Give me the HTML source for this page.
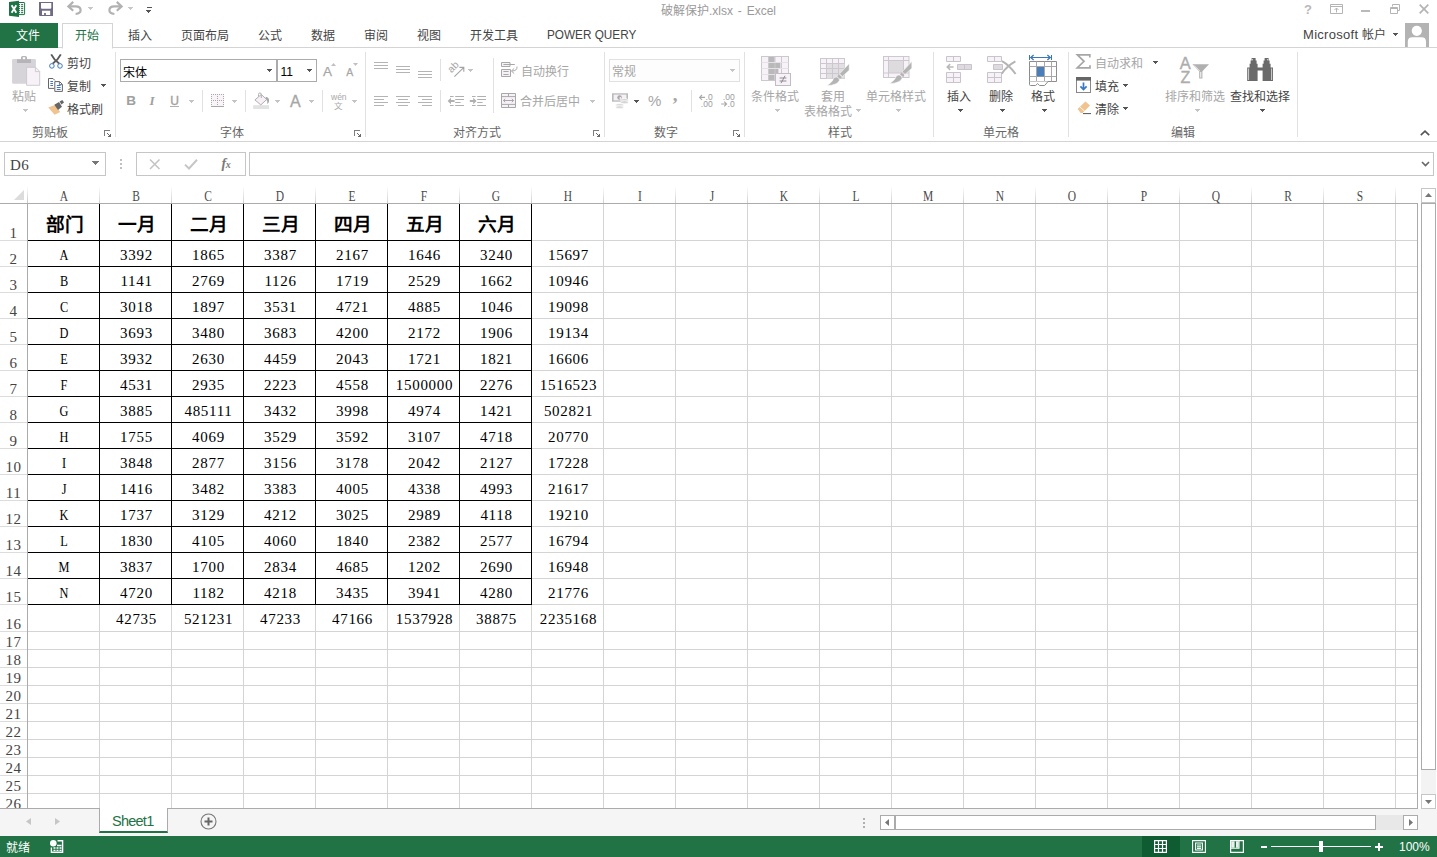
<!DOCTYPE html>
<html lang="zh-CN"><head><meta charset="utf-8"><title>破解保护.xlsx - Excel</title>
<style>

html,body{margin:0;padding:0;}
body{width:1437px;height:857px;overflow:hidden;background:#fff;position:relative;font-family:"Liberation Sans",sans-serif;font-size:12px;color:#444;}
.a{position:absolute;}
.t{position:absolute;white-space:nowrap;line-height:16px;height:16px;font-size:12px;}
.g{color:#a6a6a6;}
.d{color:#444;}
.hl{position:absolute;height:1px;background:#d4d4d4;}
.vl{position:absolute;width:1px;background:#d4d4d4;}
.c{position:absolute;width:71px;padding-left:2px;text-align:center;font-family:"Liberation Serif",serif;font-size:15px;letter-spacing:0.7px;color:#000;line-height:16px;height:16px;white-space:nowrap;}
.ch{position:absolute;width:72px;text-align:center;font-family:"Liberation Serif",serif;font-size:14px;color:#4a4a4a;line-height:14px;height:14px;transform:scaleX(.82);}
.rh{position:absolute;left:0;width:27px;text-align:center;font-family:"Liberation Serif",serif;font-size:15px;letter-spacing:0.5px;color:#444;line-height:14px;height:14px;}
.hd{position:absolute;width:72px;text-align:center;font-family:"Liberation Serif",serif;font-weight:bold;font-size:18.67px;color:#000;line-height:22px;height:22px;white-space:nowrap;}
.bk{position:absolute;background:#000;}
.cl{transform:scaleX(.82);}
svg{position:absolute;overflow:visible;}
.sep{position:absolute;width:1px;background:#e1e1e1;}
.dd{position:absolute;width:0;height:0;border-left:3px solid transparent;border-right:3px solid transparent;border-top:3px solid #b5b5b5;}
.ddk{border-top-color:#555;}
.lbl{color:#666;}

</style></head><body>
<!-- title bar -->
<div class="t d" style="left:661px;top:2.5px;font-size:12px;color:#9a9a9a;word-spacing:1.5px;">破解保护.xlsx - Excel</div>
<!-- tabs -->
<div class="a" style="left:0;top:47px;width:1437px;height:1px;background:#d4d4d4"></div>
<div class="a" style="left:0;top:23px;width:58px;height:25px;background:#217346"></div>
<div class="a" style="left:62px;top:23px;width:49px;height:24px;background:#fff;border:1px solid #d4d4d4;border-bottom:1px solid #fff;"></div>
<div class="t d" style="left:16px;top:28px;font-size:12px;color:#fff;">文件</div>
<div class="t d" style="left:75px;top:28px;font-size:12px;color:#217346;">开始</div>
<div class="t d" style="left:128px;top:28px;">插入</div>
<div class="t d" style="left:181px;top:28px;">页面布局</div>
<div class="t d" style="left:258px;top:28px;">公式</div>
<div class="t d" style="left:310.5px;top:28px;">数据</div>
<div class="t d" style="left:364px;top:28px;">审阅</div>
<div class="t d" style="left:417px;top:28px;">视图</div>
<div class="t d" style="left:469.5px;top:28px;">开发工具</div>
<div class="t d" style="left:546.8px;top:26.6px;font-size:13px;transform:scaleX(.905);transform-origin:0 50%;">POWER QUERY</div>
<div class="t d" style="left:1303px;top:26.5px;font-size:13px;letter-spacing:0.3px;">Microsoft <span style="font-size:12px;letter-spacing:0">帐户</span></div>
<svg width="5" height="3" viewBox="0 0 5 3" shape-rendering="crispEdges" fill="#555" style="left:1393px;top:33px"><rect x="0" y="0" width="5" height="1"/><rect x="1" y="1" width="3" height="1"/><rect x="2" y="2" width="1" height="1"/></svg>
<div class="a" style="left:1405px;top:23px;width:24px;height:24px;background:#b3b3b3;overflow:hidden"><svg width="24" height="24" viewBox="0 0 24 24" style="left:0;top:0"><circle cx="11.8" cy="7.8" r="5.1" fill="#fff"/><path d="M2.8 24 V18.6 Q2.8 14.2 7.4 14.2 H16.4 Q21 14.2 21 18.6 V24 Z" fill="#fff"/></svg></div>
<!-- ribbon -->
<div class="a" style="left:0;top:141px;width:1437px;height:1px;background:#d4d4d4"></div>
<div class="sep" style="left:115px;top:52px;height:85px"></div>
<div class="sep" style="left:365px;top:52px;height:85px"></div>
<div class="sep" style="left:604px;top:52px;height:85px"></div>
<div class="sep" style="left:744px;top:52px;height:85px"></div>
<div class="sep" style="left:933px;top:52px;height:85px"></div>
<div class="sep" style="left:1068px;top:52px;height:85px"></div>
<div class="sep" style="left:1297px;top:52px;height:85px"></div>
<!-- QAT -->
<svg width="18" height="18" viewBox="0 0 18 18" style="left:8px;top:0px"><path d="M10.5 2.5 H16 Q16.6 2.5 16.6 3.1 V14 Q16.6 14.6 16 14.6 H10.5 Z" fill="#fff" stroke="#1f7244" stroke-width="1"/><g fill="#1f7244"><rect x="13.1" y="4.1" width="2.1" height="1.1"/><rect x="11" y="4.1" width="1" height="1.1"/><rect x="13.1" y="6.1" width="2.1" height="1.1"/><rect x="11" y="6.1" width="1" height="1.1"/><rect x="13.1" y="8.1" width="2.1" height="1.1"/><rect x="11" y="8.1" width="1" height="1.1"/><rect x="13.1" y="10.1" width="2.1" height="1.1"/><rect x="11" y="10.1" width="1" height="1.1"/><rect x="13.1" y="12.1" width="2.1" height="1.1"/><rect x="11" y="12.1" width="1" height="1.1"/></g><path d="M1 2.1 L11 0.7 V17.1 L1 15.8 Z" fill="#1f7244"/><path d="M3.6 5.3 L8.3 12.7 M8.3 5.3 L3.6 12.7" stroke="#fff" stroke-width="1.9"/></svg>
<svg width="14" height="14" viewBox="0 0 14 14" style="left:39px;top:2px"><path d="M0 0 H14 V14 H0.8 L0 13.2 Z" fill="#6f6a85"/><path d="M2 1 H12.3 V5.8 Q12.3 6.8 11.3 6.8 H3 Q2 6.8 2 5.8 Z" fill="#fff"/><path d="M3 8.7 H11.2 V13 H3 Z" fill="#fff"/><path d="M5.1 11 H6.9 V13 H5.1 Z" fill="#6f6a85"/></svg>
<svg width="16" height="15" viewBox="0 0 16 15" style="left:67px;top:1px"><path d="M1.4 5.4 H8.6 Q13.6 5.4 13.6 9.3 Q13.6 12.6 8.6 13" fill="none" stroke="#b2b2b2" stroke-width="2.2"/><path d="M6.2 0.9 L1.4 5.4 L6.2 9.8" fill="none" stroke="#b2b2b2" stroke-width="2.2"/></svg>
<svg width="5" height="3" viewBox="0 0 5 3" shape-rendering="crispEdges" fill="#c8c8c8" style="left:88px;top:7px"><rect x="0" y="0" width="5" height="1"/><rect x="1" y="1" width="3" height="1"/><rect x="2" y="2" width="1" height="1"/></svg>
<svg width="16" height="15" viewBox="0 0 16 15" style="left:107px;top:1px"><path d="M14.6 5.4 H7.4 Q2.4 5.4 2.4 9.3 Q2.4 12.6 7.4 13" fill="none" stroke="#b2b2b2" stroke-width="2.2"/><path d="M9.8 0.9 L14.6 5.4 L9.8 9.8" fill="none" stroke="#b2b2b2" stroke-width="2.2"/></svg>
<svg width="5" height="3" viewBox="0 0 5 3" shape-rendering="crispEdges" fill="#c8c8c8" style="left:128px;top:7px"><rect x="0" y="0" width="5" height="1"/><rect x="1" y="1" width="3" height="1"/><rect x="2" y="2" width="1" height="1"/></svg>
<div class="a" style="left:147px;top:7px;width:5px;height:1px;background:#555"></div>
<svg width="5" height="3" viewBox="0 0 5 3" shape-rendering="crispEdges" fill="#555" style="left:146px;top:10px"><rect x="0" y="0" width="5" height="1"/><rect x="1" y="1" width="3" height="1"/><rect x="2" y="2" width="1" height="1"/></svg>
<!-- window controls -->
<div class="t d" style="left:1304px;top:1.5999999999999996px;font-size:13px;color:#b9b9b9;font-weight:bold;">?</div>
<svg width="13" height="10" viewBox="0 0 13 10" style="left:1330px;top:4px"><path d="M0.5 0.5 H12.5 V9.5 H0.5 Z M0.5 2.5 H12.5" fill="none" stroke="#b4b4b4" stroke-width="1"/><path d="M6.5 8.5 V4.2 M4.5 6 L6.5 4 L8.5 6" fill="none" stroke="#b4b4b4" stroke-width="1"/></svg>
<div class="a" style="left:1361px;top:10px;width:9px;height:2px;background:#b9b9b9"></div>
<svg width="10" height="10" viewBox="0 0 10 10" style="left:1390px;top:4px"><path d="M2.5 2.5 V0.5 H9.5 V6.5 H7.5" fill="none" stroke="#b4b4b4" stroke-width="1"/><path d="M0.5 3.5 H7.5 V9.5 H0.5 Z M0.5 4.5 H7.5" fill="none" stroke="#b4b4b4" stroke-width="1"/></svg>
<svg width="10" height="10" viewBox="0 0 10 10" style="left:1419px;top:4px"><path d="M0.7 0.7 L9.3 9.3 M9.3 0.7 L0.7 9.3" stroke="#b4b4b4" stroke-width="1.7"/></svg>
<!-- clipboard -->
<svg width="28" height="30" viewBox="0 0 28 30" style="left:12px;top:56px"><rect x="0.1" y="3" width="23.8" height="24.8" rx="1.2" fill="#d6d4d8"/><path d="M5 3.2 H9 V1.6 Q9 0 10.6 0 H13.4 Q15 0 15 1.6 V3.2 H19 V6.9 H5 Z" fill="#b6b4b8"/><rect x="10.8" y="1.2" width="2.4" height="2" fill="#fff"/><path d="M14.6 11.3 H23.6 L27.7 15.4 V29.3 H14.6 Z" fill="#f7f2f8" stroke="#cbc6cd" stroke-width="0.9"/><path d="M23.4 11.5 V15.6 H27.5" fill="none" stroke="#cbc6cd" stroke-width="0.9"/></svg>
<div class="t g" style="left:11.7px;top:88.6px;">粘贴</div>
<svg width="5" height="3" viewBox="0 0 5 3" shape-rendering="crispEdges" fill="#c4c4c4" style="left:23px;top:109px"><rect x="0" y="0" width="5" height="1"/><rect x="1" y="1" width="3" height="1"/><rect x="2" y="2" width="1" height="1"/></svg>
<svg width="14" height="15" viewBox="0 0 14 15" style="left:49px;top:54px"><path d="M2.2 0.4 Q5 6 10.4 9.8 M11.8 0.4 Q9 6 3.6 9.8" fill="none" stroke="#5a5a5a" stroke-width="1.9"/><circle cx="2.9" cy="11.9" r="2.3" fill="#fff" stroke="#3b78c3" stroke-width="1"/><circle cx="11" cy="11.9" r="2.3" fill="#fff" stroke="#3b78c3" stroke-width="1"/></svg>
<div class="t d" style="left:67.3px;top:55.6px;">剪切</div>
<svg width="15" height="14" viewBox="0 0 15 14" style="left:48px;top:78px"><path d="M6.3 10.4 H0.5 V0.5 H5 L6.9 2.4" fill="none" stroke="#666" stroke-width="1"/><path d="M2.4 3.5 H5 M2.4 5.5 H5 M2.4 7.5 H5" stroke="#3b78c3" stroke-width="1"/><path d="M6.8 3.6 H11.6 L14.4 6.4 V13.4 H6.8 Z" fill="#fff" stroke="#666" stroke-width="1"/><path d="M11.4 3.8 V6.6 H14.2" fill="none" stroke="#666" stroke-width="0.9"/><path d="M8.8 7.5 H12.6 M8.8 9.5 H12.6 M8.8 11.5 H12.6" stroke="#3b78c3" stroke-width="1"/></svg>
<div class="t d" style="left:67.3px;top:78.6px;">复制</div>
<svg width="5" height="3" viewBox="0 0 5 3" shape-rendering="crispEdges" fill="#555" style="left:101px;top:84px"><rect x="0" y="0" width="5" height="1"/><rect x="1" y="1" width="3" height="1"/><rect x="2" y="2" width="1" height="1"/></svg>
<svg width="17" height="16" viewBox="0 0 17 16" style="left:48px;top:100px"><path d="M0.3 7.4 L7 5 L12.2 12 L6.6 14.8 Z" fill="#f0c38f"/><path d="M6.3 4.7 L11 2 L14 6.8 L10 10 Z" fill="#666"/><path d="M11.6 1.6 L14.4 0 L16 2.4 L13.4 4.4 Z" fill="#666"/></svg>
<div class="t d" style="left:67.2px;top:101.5px;">格式刷</div>
<div class="t lbl" style="left:31.7px;top:124.80000000000001px;">剪贴板</div>
<svg width="8" height="8" viewBox="0 0 8 8" shape-rendering="crispEdges" style="left:104px;top:130px"><path d="M0 0 H6 V1 H1 V6 H0 Z" fill="#7d7d7d"/><path d="M3 3 h1 v1 h1 v1 h1 v-1 h1 v3 h-3 v-1 h1 v-1 h-1 v-1 h-1 Z" fill="#6a6a6a"/></svg>
<!-- font -->
<div class="a" style="left:120px;top:59px;width:155px;height:21px;border:1px solid #ababab;background:#fff"></div>
<div class="a" style="left:277px;top:59px;width:38px;height:21px;border:1px solid #ababab;background:#fff"></div>
<div class="t d" style="left:122.5px;top:64.5px;font-size:12px;color:#000;">宋体</div>
<svg width="5" height="3" viewBox="0 0 5 3" shape-rendering="crispEdges" fill="#555" style="left:267px;top:69px"><rect x="0" y="0" width="5" height="1"/><rect x="1" y="1" width="3" height="1"/><rect x="2" y="2" width="1" height="1"/></svg>
<div class="t d" style="left:280.5px;top:63.8px;font-size:12px;color:#000;">11</div>
<svg width="5" height="3" viewBox="0 0 5 3" shape-rendering="crispEdges" fill="#555" style="left:307px;top:69px"><rect x="0" y="0" width="5" height="1"/><rect x="1" y="1" width="3" height="1"/><rect x="2" y="2" width="1" height="1"/></svg>
<div class="t g" style="left:323px;top:63.5px;font-size:13.5px;-webkit-text-stroke:0.25px #a6a6a6;">A</div>
<svg width="5" height="3" viewBox="0 0 5 3" style="left:331px;top:63px"><path d="M0 3 L2.5 0 L5 3 Z" fill="#c0c0c0"/></svg>
<div class="t g" style="left:346.3px;top:64.3px;font-size:10.5px;-webkit-text-stroke:0.25px #a6a6a6;">A</div>
<svg width="5" height="3" viewBox="0 0 5 3" style="left:353px;top:63px"><path d="M0 0 L2.5 3 L5 0 Z" fill="#c0c0c0"/></svg>
<div class="t g" style="left:126.3px;top:93.3px;font-size:13.5px;font-weight:bold;color:#a0a0a0;">B</div>
<div class="t g" style="left:149.5px;top:93px;font-size:13px;font-family:'Liberation Serif',serif;font-style:italic;font-weight:bold;color:#a0a0a0;">I</div>
<div class="t g" style="left:170.3px;top:92.6px;font-size:12px;color:#a0a0a0;-webkit-text-stroke:0.35px #a0a0a0;">U</div>
<div class="a" style="left:170px;top:106px;width:9px;height:1px;background:#b0b0b0"></div>
<svg width="5" height="3" viewBox="0 0 5 3" shape-rendering="crispEdges" fill="#c4c4c4" style="left:189px;top:100px"><rect x="0" y="0" width="5" height="1"/><rect x="1" y="1" width="3" height="1"/><rect x="2" y="2" width="1" height="1"/></svg>
<div class="sep" style="left:202px;top:90px;height:22px"></div>
<svg width="13" height="13" viewBox="0 0 13 13" shape-rendering="crispEdges" style="left:211px;top:94px"><rect x="0" y="0" width="13" height="12" fill="#f8f4f8"/><g fill="#a8a8a8"><rect x="0" y="0" width="1" height="1"/><rect x="2" y="0" width="1" height="1"/><rect x="4" y="0" width="1" height="1"/><rect x="6" y="0" width="1" height="1"/><rect x="8" y="0" width="1" height="1"/><rect x="10" y="0" width="1" height="1"/><rect x="12" y="0" width="1" height="1"/><rect x="0" y="2" width="1" height="1"/><rect x="6" y="2" width="1" height="1"/><rect x="12" y="2" width="1" height="1"/><rect x="0" y="4" width="1" height="1"/><rect x="6" y="4" width="1" height="1"/><rect x="12" y="4" width="1" height="1"/><rect x="0" y="6" width="1" height="1"/><rect x="2" y="6" width="1" height="1"/><rect x="4" y="6" width="1" height="1"/><rect x="6" y="6" width="1" height="1"/><rect x="8" y="6" width="1" height="1"/><rect x="10" y="6" width="1" height="1"/><rect x="12" y="6" width="1" height="1"/><rect x="0" y="8" width="1" height="1"/><rect x="6" y="8" width="1" height="1"/><rect x="12" y="8" width="1" height="1"/><rect x="0" y="10" width="1" height="1"/><rect x="6" y="10" width="1" height="1"/><rect x="12" y="10" width="1" height="1"/><rect x="0" y="12" width="13" height="1"/></g></svg>
<svg width="5" height="3" viewBox="0 0 5 3" shape-rendering="crispEdges" fill="#c4c4c4" style="left:232px;top:100px"><rect x="0" y="0" width="5" height="1"/><rect x="1" y="1" width="3" height="1"/><rect x="2" y="2" width="1" height="1"/></svg>
<div class="sep" style="left:245px;top:90px;height:22px"></div>
<svg width="17" height="17" viewBox="0 0 17 17" style="left:253px;top:92px"><rect x="0.2" y="13.2" width="15.8" height="3.8" fill="#e2e2e2"/><path d="M8.3 2.5 L13.7 7.5 L7.8 12.9 L1.9 7.9 Z" fill="#f7f1f7" stroke="#b0b0b0" stroke-width="1"/><path d="M5.5 4.6 V2.4 Q5.5 1 6.9 1 Q8.3 1 8.3 2.4 V6" fill="none" stroke="#b0b0b0" stroke-width="1"/><path d="M12.6 4.8 Q16.6 5.4 16 9.6 Q15.6 11.6 14.2 12 Q14.8 8.6 13.2 7.2 Z" fill="#a8a8a8"/></svg>
<svg width="5" height="3" viewBox="0 0 5 3" shape-rendering="crispEdges" fill="#c4c4c4" style="left:275px;top:100px"><rect x="0" y="0" width="5" height="1"/><rect x="1" y="1" width="3" height="1"/><rect x="2" y="2" width="1" height="1"/></svg>
<div class="t g" style="left:289.9px;top:93.8px;font-size:16px;-webkit-text-stroke:0.3px #a6a6a6;">A</div>
<svg width="5" height="3" viewBox="0 0 5 3" shape-rendering="crispEdges" fill="#c4c4c4" style="left:309px;top:100px"><rect x="0" y="0" width="5" height="1"/><rect x="1" y="1" width="3" height="1"/><rect x="2" y="2" width="1" height="1"/></svg>
<div class="sep" style="left:322px;top:90px;height:22px"></div>
<div class="t g" style="left:331px;top:89px;font-size:8.5px;color:#a8a8a8;line-height:10px;height:10px;top:91.5px;">wén</div>
<div class="t g" style="left:334.4px;top:98.5px;font-size:8.5px;color:#a8a8a8;line-height:10px;height:10px;top:100.5px;">文</div>
<svg width="5" height="3" viewBox="0 0 5 3" shape-rendering="crispEdges" fill="#c4c4c4" style="left:352px;top:100px"><rect x="0" y="0" width="5" height="1"/><rect x="1" y="1" width="3" height="1"/><rect x="2" y="2" width="1" height="1"/></svg>
<div class="t lbl" style="left:220px;top:124.80000000000001px;">字体</div>
<svg width="8" height="8" viewBox="0 0 8 8" shape-rendering="crispEdges" style="left:354px;top:130px"><path d="M0 0 H6 V1 H1 V6 H0 Z" fill="#7d7d7d"/><path d="M3 3 h1 v1 h1 v1 h1 v-1 h1 v3 h-3 v-1 h1 v-1 h-1 v-1 h-1 Z" fill="#6a6a6a"/></svg>
<!-- alignment -->
<div class="a" style="left:374px;top:62px;width:14px;height:1px;background:#b4b4b4"></div>
<div class="a" style="left:374px;top:65px;width:14px;height:1px;background:#b4b4b4"></div>
<div class="a" style="left:374px;top:68px;width:14px;height:1px;background:#b4b4b4"></div>
<div class="a" style="left:396px;top:66px;width:14px;height:1px;background:#b4b4b4"></div>
<div class="a" style="left:396px;top:69px;width:14px;height:1px;background:#b4b4b4"></div>
<div class="a" style="left:396px;top:72px;width:14px;height:1px;background:#b4b4b4"></div>
<div class="a" style="left:418px;top:71px;width:14px;height:1px;background:#b4b4b4"></div>
<div class="a" style="left:418px;top:74px;width:14px;height:1px;background:#b4b4b4"></div>
<div class="a" style="left:418px;top:77px;width:14px;height:1px;background:#b4b4b4"></div>
<div class="a" style="left:374px;top:96px;width:14px;height:1px;background:#b4b4b4"></div>
<div class="a" style="left:374px;top:99px;width:10px;height:1px;background:#b4b4b4"></div>
<div class="a" style="left:374px;top:102px;width:14px;height:1px;background:#b4b4b4"></div>
<div class="a" style="left:374px;top:105px;width:10px;height:1px;background:#b4b4b4"></div>
<div class="a" style="left:396.0px;top:96px;width:14px;height:1px;background:#b4b4b4"></div>
<div class="a" style="left:398.0px;top:99px;width:10px;height:1px;background:#b4b4b4"></div>
<div class="a" style="left:396.0px;top:102px;width:14px;height:1px;background:#b4b4b4"></div>
<div class="a" style="left:398.0px;top:105px;width:10px;height:1px;background:#b4b4b4"></div>
<div class="a" style="left:418px;top:96px;width:14px;height:1px;background:#b4b4b4"></div>
<div class="a" style="left:422px;top:99px;width:10px;height:1px;background:#b4b4b4"></div>
<div class="a" style="left:418px;top:102px;width:14px;height:1px;background:#b4b4b4"></div>
<div class="a" style="left:422px;top:105px;width:10px;height:1px;background:#b4b4b4"></div>
<div class="sep" style="left:440px;top:59px;height:22px"></div>
<div class="sep" style="left:440px;top:90px;height:22px"></div>
<svg width="18" height="17" viewBox="0 0 18 17" style="left:447px;top:61px"><g transform="translate(4.6 12.2) rotate(-45)"><text x="0" y="0" font-family="Liberation Sans" font-size="10" fill="#a3a3a3">ab</text></g><path d="M7.4 15.6 L16.4 6.8 M12.4 6.4 H16.8 V10.8" fill="none" stroke="#a3a3a3" stroke-width="1.1"/></svg>
<svg width="5" height="3" viewBox="0 0 5 3" shape-rendering="crispEdges" fill="#c4c4c4" style="left:468px;top:69px"><rect x="0" y="0" width="5" height="1"/><rect x="1" y="1" width="3" height="1"/><rect x="2" y="2" width="1" height="1"/></svg>
<svg width="17" height="12" viewBox="0 0 17 12" style="left:447px;top:95px"><path d="M3 1.5 H6.6 M8.2 1.5 H17 M8.2 4.5 H17 M8.2 7.5 H13.6 M3 10.5 H6.6 M8.2 10.5 H17" stroke="#b0b0b0" stroke-width="1"/><path d="M0.6 6 L4 2.8 V4.9 H7.6 V7.1 H4 V9.2 Z" fill="#b0b0b0"/></svg>
<svg width="17" height="12" viewBox="0 0 17 12" style="left:469px;top:95px"><path d="M3 1.5 H6.6 M8.2 1.5 H17 M8.2 4.5 H17 M8.2 7.5 H13.6 M3 10.5 H6.6 M8.2 10.5 H17" stroke="#b0b0b0" stroke-width="1"/><path d="M7.6 6 L4.2 2.8 V4.9 H0.8 V7.1 H4.2 V9.2 Z" fill="#b0b0b0"/></svg>
<div class="sep" style="left:493px;top:58px;height:55px"></div>
<svg width="17" height="15" viewBox="0 0 17 15" style="left:501px;top:62px"><path d="M0.5 0.5 H9 V4.5 H0.5 Z" fill="#f7f2f8" stroke="#a8a8a8"/><path d="M2.4 2.5 H13.8" stroke="#a8a8a8"/><path d="M0.5 7.5 H9.5 V14.5 H0.5 Z" fill="#f7f2f8" stroke="#a8a8a8"/><path d="M2.4 9.5 H7.6 M2.4 12.5 H7.6" stroke="#a8a8a8"/><path d="M16 4.6 Q16.4 9 10.8 9 M13.2 6.4 L10.4 9 L13.2 11.6" fill="none" stroke="#a8a8a8" stroke-width="1"/></svg>
<div class="t g" style="left:520.5px;top:63.599999999999994px;">自动换行</div>
<svg width="15" height="15" viewBox="0 0 15 15" style="left:501px;top:93px"><path d="M0.5 0.5 H14.5 V14.5 H0.5 Z" fill="#f7f2f8" stroke="#a8a8a8"/><path d="M0.5 3.6 H14.5 M0.5 11.4 H14.5 M7.5 0.5 V3.6 M7.5 11.4 V14.5" fill="none" stroke="#a8a8a8" stroke-width="1"/><path d="M2.4 7.5 H12.6 M4.2 5.8 L2.4 7.5 L4.2 9.2 M10.8 5.8 L12.6 7.5 L10.8 9.2" fill="none" stroke="#a8a8a8" stroke-width="1"/></svg>
<div class="t g" style="left:520px;top:93.5px;">合并后居中</div>
<svg width="5" height="3" viewBox="0 0 5 3" shape-rendering="crispEdges" fill="#c4c4c4" style="left:590px;top:100px"><rect x="0" y="0" width="5" height="1"/><rect x="1" y="1" width="3" height="1"/><rect x="2" y="2" width="1" height="1"/></svg>
<div class="t lbl" style="left:452.8px;top:124.80000000000001px;">对齐方式</div>
<svg width="8" height="8" viewBox="0 0 8 8" shape-rendering="crispEdges" style="left:593px;top:130px"><path d="M0 0 H6 V1 H1 V6 H0 Z" fill="#7d7d7d"/><path d="M3 3 h1 v1 h1 v1 h1 v-1 h1 v3 h-3 v-1 h1 v-1 h-1 v-1 h-1 Z" fill="#6a6a6a"/></svg>
<!-- number -->
<div class="a" style="left:609px;top:59px;width:129px;height:21px;border:1px solid #e1e1e1;background:#fdfdfd"></div>
<div class="t g" style="left:612.4px;top:63.8px;">常规</div>
<svg width="5" height="3" viewBox="0 0 5 3" shape-rendering="crispEdges" fill="#c4c4c4" style="left:730px;top:69px"><rect x="0" y="0" width="5" height="1"/><rect x="1" y="1" width="3" height="1"/><rect x="2" y="2" width="1" height="1"/></svg>
<svg width="18" height="17" viewBox="0 0 18 17" style="left:611px;top:93px"><rect x="1" y="0.3" width="16" height="8.4" fill="#b9b9b9"/><rect x="2.6" y="1.6" width="12.8" height="5.8" fill="#f5f0f5"/><circle cx="8.6" cy="4.5" r="2.3" fill="#a8a8a8"/><circle cx="9.4" cy="4.9" r="1" fill="#f5f0f5"/><ellipse cx="13.4" cy="7" rx="3.9" ry="1.5" fill="#d4d4d4" stroke="#fff" stroke-width="0.7"/><ellipse cx="13.4" cy="9.2" rx="3.9" ry="1.5" fill="#d4d4d4" stroke="#fff" stroke-width="0.7"/><ellipse cx="8.6" cy="12" rx="3.9" ry="1.5" fill="#dadada" stroke="#fff" stroke-width="0.7"/><ellipse cx="8.6" cy="14.2" rx="3.9" ry="1.5" fill="#dadada" stroke="#fff" stroke-width="0.7"/></svg>
<svg width="5" height="3" viewBox="0 0 5 3" shape-rendering="crispEdges" fill="#555" style="left:634px;top:100px"><rect x="0" y="0" width="5" height="1"/><rect x="1" y="1" width="3" height="1"/><rect x="2" y="2" width="1" height="1"/></svg>
<div class="t g" style="left:648px;top:93.3px;font-size:15px;">%</div>
<div class="t g" style="left:672.8px;top:87px;font-size:19px;font-family:'Liberation Serif',serif;font-weight:bold;">,</div>
<div class="sep" style="left:691px;top:90px;height:22px"></div>
<svg width="15" height="14" viewBox="0 0 15 14" style="left:699px;top:94px"><path d="M0.6 3.4 H6 M3 1 L0.6 3.4 L3 5.8" fill="none" stroke="#a8a8a8" stroke-width="1.1"/><text x="6.6" y="6" font-family="Liberation Sans" font-size="8.5" fill="#9c9c9c">.0</text><text x="1.8" y="12.8" font-family="Liberation Sans" font-size="8.5" fill="#9c9c9c">.00</text></svg>
<svg width="15" height="14" viewBox="0 0 15 14" style="left:721px;top:94px"><text x="1.8" y="6" font-family="Liberation Sans" font-size="8.5" fill="#9c9c9c">.00</text><path d="M0.2 10 H5.6 M3.2 7.6 L5.6 10 L3.2 12.4" fill="none" stroke="#a8a8a8" stroke-width="1.1"/><text x="6.6" y="12.8" font-family="Liberation Sans" font-size="8.5" fill="#9c9c9c">.0</text></svg>
<div class="t lbl" style="left:653.8px;top:124.80000000000001px;">数字</div>
<svg width="8" height="8" viewBox="0 0 8 8" shape-rendering="crispEdges" style="left:733px;top:130px"><path d="M0 0 H6 V1 H1 V6 H0 Z" fill="#7d7d7d"/><path d="M3 3 h1 v1 h1 v1 h1 v-1 h1 v3 h-3 v-1 h1 v-1 h-1 v-1 h-1 Z" fill="#6a6a6a"/></svg>
<!-- styles -->
<svg width="30" height="30" viewBox="0 0 30 30" style="left:761px;top:56px"><rect x="0.5" y="0.5" width="27" height="24" fill="#f7f2f8" stroke="#cdc7cf" stroke-width="1"/><rect x="8" y="1" width="5.6" height="23" fill="#b9b9b9"/><rect x="8" y="7" width="11.4" height="5" fill="#b9b9b9"/><rect x="8" y="13" width="9.4" height="5" fill="#b9b9b9"/><path d="M7.5 0.5 V24.5 M14 0.5 V24.5 M20.5 0.5 V24.5" stroke="#cdc7cf" stroke-width="1" fill="none"/><path d="M0.5 6.5 H27.5 M0.5 12.5 H27.5 M0.5 18.5 H27.5" stroke="#e6e1e7" stroke-width="1" fill="none"/><rect x="14.5" y="17.5" width="15" height="12" fill="#f7f2f8" stroke="#c2bdc4" stroke-width="1"/><path d="M18.6 22 H25.4 M18.6 25 H25.4 M24 19.8 L20 27.2" stroke="#8c8c8c" stroke-width="1" fill="none"/></svg>
<div class="t g" style="left:751px;top:88.7px;">条件格式</div>
<svg width="5" height="3" viewBox="0 0 5 3" shape-rendering="crispEdges" fill="#c4c4c4" style="left:775px;top:109px"><rect x="0" y="0" width="5" height="1"/><rect x="1" y="1" width="3" height="1"/><rect x="2" y="2" width="1" height="1"/></svg>
<svg width="30" height="28" viewBox="0 0 30 28" style="left:820px;top:58px"><rect x="0.5" y="0.5" width="24" height="20" fill="#f7f2f8" stroke="#cdc7cf" stroke-width="1"/><rect x="6.5" y="5.5" width="18" height="15" fill="#e2dfe3"/><path d="M6.5 0.5 V20.5 M12.5 0.5 V20.5 M18.5 0.5 V20.5 M0.5 5.5 H24.5 M0.5 10.5 H24.5 M0.5 15.5 H24.5" stroke="#cdc7cf" stroke-width="1" fill="none"/><path d="M29.2 5.6 V12.2 L22.4 18.4 L19.6 15.8 Z" fill="#b4b4b4" stroke="#fff" stroke-width="0.5"/><path d="M19 16.6 L21.8 19.2 L20 20.8 L17.4 18.4 Z" fill="#b4b4b4"/><path d="M16.6 19 Q19.6 19.6 19.4 22.4 Q17.4 27 7 27.6 Q12.6 24 13.4 20.8 Q14.6 18.6 16.6 19 Z" fill="#b4b4b4" stroke="#fff" stroke-width="0.5"/></svg>
<div class="t g" style="left:821px;top:88.7px;">套用</div>
<div class="t g" style="left:804px;top:104.3px;">表格格式</div>
<svg width="5" height="3" viewBox="0 0 5 3" shape-rendering="crispEdges" fill="#c4c4c4" style="left:856px;top:109px"><rect x="0" y="0" width="5" height="1"/><rect x="1" y="1" width="3" height="1"/><rect x="2" y="2" width="1" height="1"/></svg>
<svg width="30" height="28" viewBox="0 0 30 28" style="left:883px;top:56px"><rect x="0.5" y="0.5" width="25.5" height="21" fill="#f7f2f8" stroke="#cdc7cf" stroke-width="1"/><rect x="5.5" y="4.5" width="15" height="12.5" fill="#dedbdf"/><path d="M5.5 0.5 V21.5 M20.5 0.5 V21.5 M0.5 4.5 H26 M0.5 17 H26" stroke="#cdc7cf" stroke-width="1" fill="none"/><path d="M28.8 5.6 V12.2 L22 18.4 L19.2 15.8 Z" fill="#b4b4b4" stroke="#fff" stroke-width="0.5"/><path d="M18.6 16.6 L21.4 19.2 L19.6 20.8 L17 18.4 Z" fill="#b4b4b4"/><path d="M16.2 19 Q19.2 19.6 19 22.4 Q17 27 6.6 27.6 Q12.2 24 13 20.8 Q14.2 18.6 16.2 19 Z" fill="#b4b4b4" stroke="#fff" stroke-width="0.5"/></svg>
<div class="t g" style="left:866px;top:88.7px;">单元格样式</div>
<svg width="5" height="3" viewBox="0 0 5 3" shape-rendering="crispEdges" fill="#c4c4c4" style="left:896px;top:109px"><rect x="0" y="0" width="5" height="1"/><rect x="1" y="1" width="3" height="1"/><rect x="2" y="2" width="1" height="1"/></svg>
<div class="t lbl" style="left:827.6px;top:124.80000000000001px;">样式</div>
<!-- cells -->
<svg width="27" height="27" viewBox="0 0 27 27" style="left:946px;top:56px"><path d="M0.5 0.5 H14.5 V5.5 H0.5 Z M7.5 0.5 V5.5" fill="#f7f2f8" stroke="#c9c3cb"/><path d="M11.5 8.5 H25.5 V13.5 H11.5 Z" fill="#dedae0" stroke="#c9c3cb"/><path d="M18.5 8.5 V13.5" stroke="#c9c3cb"/><path d="M0.5 16.5 H14.5 V26.5 H0.5 Z" fill="#f7f2f8" stroke="#c9c3cb"/><path d="M7.5 16.5 V26.5 M0.5 21.5 H14.5" stroke="#c9c3cb" fill="none"/><path d="M1.2 11 H7.6 M4.2 8.1 L1.2 11 L4.2 13.9" fill="none" stroke="#b9b9b9" stroke-width="1.5"/></svg>
<div class="t d" style="left:947px;top:88.7px;">插入</div>
<svg width="5" height="3" viewBox="0 0 5 3" shape-rendering="crispEdges" fill="#555" style="left:958px;top:109px"><rect x="0" y="0" width="5" height="1"/><rect x="1" y="1" width="3" height="1"/><rect x="2" y="2" width="1" height="1"/></svg>
<svg width="30" height="27" viewBox="0 0 30 27" style="left:987px;top:56px"><path d="M0.5 0.5 H14.5 V5.5 H0.5 Z M7.5 0.5 V5.5" fill="#f7f2f8" stroke="#c9c3cb"/><path d="M6.5 8.5 H15.5 V13.5 H6.5 Z" fill="#dedae0" stroke="#c9c3cb"/><path d="M0.5 16.5 H14.5 V26.5 H0.5 Z" fill="#f7f2f8" stroke="#c9c3cb"/><path d="M7.5 16.5 V26.5 M0.5 21.5 H14.5" stroke="#c9c3cb" fill="none"/><path d="M15 5.2 Q22 9 28.6 18 M28.4 5.4 Q20 10 14.8 17.6" fill="none" stroke="#b4b4b4" stroke-width="2"/></svg>
<div class="t d" style="left:989px;top:88.7px;">删除</div>
<svg width="5" height="3" viewBox="0 0 5 3" shape-rendering="crispEdges" fill="#555" style="left:1000px;top:109px"><rect x="0" y="0" width="5" height="1"/><rect x="1" y="1" width="3" height="1"/><rect x="2" y="2" width="1" height="1"/></svg>
<svg width="29" height="32" viewBox="0 0 29 32" style="left:1029px;top:54px"><path d="M1.5 3.5 H21.5 M0.5 1 V6 M22.5 1 V6" fill="none" stroke="#3b78b8" stroke-width="1"/><path d="M4.6 1 L1.8 3.5 L4.6 6 M18.4 1 L21.2 3.5 L18.4 6" fill="none" stroke="#3b78b8" stroke-width="1.3"/><path d="M0.5 7.5 H27.5 V27.5 H0.5 Z" fill="#fff" stroke="#8c8c8c"/><path d="M7.5 7.5 V27.5 M15.5 7.5 V27.5 M22.5 7.5 V27.5 M0.5 12.5 H27.5 M0.5 22.5 H27.5" stroke="#a8a8a8" fill="none"/><rect x="8" y="13" width="7" height="9.4" fill="#4a7eba"/><path d="M0.5 27.5 V30.5 Q0.5 31.5 1.5 31.5 H6.6 L8.6 29.6 L10.6 31.5 H15.6 L19 27.6" fill="#fff" stroke="#8c8c8c"/></svg>
<div class="t d" style="left:1031px;top:88.7px;">格式</div>
<svg width="5" height="3" viewBox="0 0 5 3" shape-rendering="crispEdges" fill="#555" style="left:1042px;top:109px"><rect x="0" y="0" width="5" height="1"/><rect x="1" y="1" width="3" height="1"/><rect x="2" y="2" width="1" height="1"/></svg>
<div class="t lbl" style="left:983px;top:124.80000000000001px;">单元格</div>
<!-- editing -->
<svg width="15" height="15" viewBox="0 0 15 15" style="left:1076px;top:54px"><path d="M13.8 3.4 V0.9 H1.4 L8 7.3 L1.2 13.9 H14 V11.2" fill="none" stroke="#a6a6a6" stroke-width="1.7"/></svg>
<div class="t g" style="left:1095.3px;top:55.6px;">自动求和</div>
<svg width="5" height="3" viewBox="0 0 5 3" shape-rendering="crispEdges" fill="#555" style="left:1153px;top:61px"><rect x="0" y="0" width="5" height="1"/><rect x="1" y="1" width="3" height="1"/><rect x="2" y="2" width="1" height="1"/></svg>
<svg width="15" height="16" viewBox="0 0 15 16" style="left:1076px;top:77px"><rect x="0.5" y="0.5" width="14" height="15" fill="#fff" stroke="#888"/><rect x="0" y="0" width="15" height="3.6" fill="#666"/><path d="M7.5 5.6 V12.4 M4.4 9.4 L7.5 12.6 L10.6 9.4" fill="none" stroke="#3b78c3" stroke-width="1.7"/></svg>
<div class="t d" style="left:1095.3px;top:78.6px;">填充</div>
<svg width="5" height="3" viewBox="0 0 5 3" shape-rendering="crispEdges" fill="#555" style="left:1123px;top:84px"><rect x="0" y="0" width="5" height="1"/><rect x="1" y="1" width="3" height="1"/><rect x="2" y="2" width="1" height="1"/></svg>
<svg width="15" height="14" viewBox="0 0 15 14" style="left:1077px;top:101px"><path d="M0.6 8 L8.4 0.4 L13 4.6 L5.6 12 H3.6 Z" fill="#f0c38f"/><path d="M2.8 5.8 L7.6 10.2" stroke="#fff" stroke-width="0.9"/><path d="M6 12.6 H14" stroke="#555" stroke-width="1"/></svg>
<div class="t d" style="left:1095.3px;top:101.6px;">清除</div>
<svg width="5" height="3" viewBox="0 0 5 3" shape-rendering="crispEdges" fill="#555" style="left:1123px;top:107px"><rect x="0" y="0" width="5" height="1"/><rect x="1" y="1" width="3" height="1"/><rect x="2" y="2" width="1" height="1"/></svg>
<div class="t g" style="left:1179.8px;top:54.8px;font-size:16.5px;color:#adadad;-webkit-text-stroke:0.35px #adadad;">A</div>
<div class="t g" style="left:1180.6px;top:70.1px;font-size:16px;color:#adadad;-webkit-text-stroke:0.35px #adadad;">Z</div>
<svg width="18" height="15" viewBox="0 0 18 15" style="left:1192px;top:64px"><path d="M0.4 0.2 H17 L10.4 7.2 V14.6 L7.2 14.6 V7.2 Z" fill="#b0b0b0"/><path d="M8.3 8 V13.6 H9.3 V8 Z" fill="#fff"/><path d="M2.6 1.4 L8 7.2" stroke="#e8e8e8" stroke-width="0.8"/></svg>
<div class="t g" style="left:1164.6px;top:88.7px;">排序和筛选</div>
<svg width="5" height="3" viewBox="0 0 5 3" shape-rendering="crispEdges" fill="#c4c4c4" style="left:1195px;top:109px"><rect x="0" y="0" width="5" height="1"/><rect x="1" y="1" width="3" height="1"/><rect x="2" y="2" width="1" height="1"/></svg>
<svg width="26" height="23" viewBox="0 0 26 23" style="left:1247px;top:58px"><path d="M4.6 0 H8.6 V2.6 H9.6 V5.8 H10.6 V9.6 H15.6 V5.8 H16.6 V2.6 H17.6 V0 H21.6 V2.6 H22.6 V5.8 H23.6 V9.6 H26 V23 H15.6 V12.6 H10.6 V23 H0.2 V9.6 H2.6 V5.8 H3.6 V2.6 H4.6 Z" fill="#6a6a6a"/><path d="M1.6 10.5 V22 M24.6 10.5 V22 M5.6 1 V2.4 M20.6 1 V2.4" stroke="#fff" stroke-width="0.7"/></svg>
<div class="t d" style="left:1230.3px;top:88.7px;">查找和选择</div>
<svg width="5" height="3" viewBox="0 0 5 3" shape-rendering="crispEdges" fill="#555" style="left:1260px;top:109px"><rect x="0" y="0" width="5" height="1"/><rect x="1" y="1" width="3" height="1"/><rect x="2" y="2" width="1" height="1"/></svg>
<div class="t lbl" style="left:1170.6px;top:124.80000000000001px;">编辑</div>
<svg width="10" height="6" viewBox="0 0 10 6" style="left:1420px;top:130px"><path d="M0.8 5.2 L5 1.2 L9.2 5.2" fill="none" stroke="#555" stroke-width="1.6"/></svg>

<!-- formula bar -->
<div class="a" style="left:4px;top:152px;width:100px;height:22px;border:1px solid #c6c6c6"></div>
<div class="t" style="left:10px;top:157px;font-family:'Liberation Serif',serif;font-size:15px;letter-spacing:0.5px;color:#444">D6</div>
<svg width="7" height="4" viewBox="0 0 7 4" shape-rendering="crispEdges" fill="#777" style="left:92px;top:161px"><rect x="0" y="0" width="7" height="1"/><rect x="1" y="1" width="5" height="1"/><rect x="2" y="2" width="3" height="1"/><rect x="3" y="3" width="1" height="1"/></svg>
<div class="a" style="left:120px;top:159px;width:2px;height:2px;background:#c0c0c0"></div>
<div class="a" style="left:120px;top:163px;width:2px;height:2px;background:#c0c0c0"></div>
<div class="a" style="left:120px;top:167px;width:2px;height:2px;background:#c0c0c0"></div>
<div class="a" style="left:136px;top:152px;width:108px;height:22px;border:1px solid #c6c6c6"></div>
<svg width="12" height="11" viewBox="0 0 12 11" style="left:149px;top:159px"><path d="M1 0.5 L10.5 10 M10.5 0.5 L1 10" stroke="#c3c3c3" stroke-width="1.5" fill="none"/></svg>
<svg width="14" height="11" viewBox="0 0 14 11" style="left:184px;top:159px"><path d="M1 5.6 L5 9.5 L13 0.8" stroke="#c6c6c6" stroke-width="2" fill="none"/></svg>
<div class="t" style="left:221.5px;top:156px;font-family:'Liberation Serif',serif;font-style:italic;font-weight:bold;font-size:14px;color:#7a7a7a;letter-spacing:-0.5px">f<span style="font-size:10px">x</span></div>
<div class="a" style="left:249px;top:152px;width:1183px;height:22px;border:1px solid #c6c6c6"></div>
<svg width="9" height="6" viewBox="0 0 9 6" style="left:1421px;top:161px"><path d="M1 1 L4.5 4.5 L8 1" stroke="#666" stroke-width="1.6" fill="none"/></svg>
<!-- grid -->
<svg width="10" height="10" viewBox="0 0 10 10" style="left:14px;top:190px"><path d="M10 0 V10 H0 Z" fill="#dcdcdc"/></svg>
<div class="a" style="left:0;top:203px;width:1418px;height:1px;background:#ababab"></div>
<div class="a" style="left:27px;top:186px;width:1px;height:18px;background:linear-gradient(#fff,#c4c4c4)"></div>
<div class="a" style="left:27px;top:203px;width:1px;height:605px;background:#ababab"></div>
<div class="a" style="left:1417px;top:203px;width:1px;height:605px;background:#ababab"></div>
<div class="a" style="left:0;top:808px;width:1418px;height:1px;background:#ababab"></div>
<div class="a" style="left:99px;top:186px;width:1px;height:17px;background:linear-gradient(#fff,#d0d0d0)"></div>
<div class="vl" style="left:99px;top:204px;height:604px"></div>
<div class="a" style="left:171px;top:186px;width:1px;height:17px;background:linear-gradient(#fff,#d0d0d0)"></div>
<div class="vl" style="left:171px;top:204px;height:604px"></div>
<div class="a" style="left:243px;top:186px;width:1px;height:17px;background:linear-gradient(#fff,#d0d0d0)"></div>
<div class="vl" style="left:243px;top:204px;height:604px"></div>
<div class="a" style="left:315px;top:186px;width:1px;height:17px;background:linear-gradient(#fff,#d0d0d0)"></div>
<div class="vl" style="left:315px;top:204px;height:604px"></div>
<div class="a" style="left:387px;top:186px;width:1px;height:17px;background:linear-gradient(#fff,#d0d0d0)"></div>
<div class="vl" style="left:387px;top:204px;height:604px"></div>
<div class="a" style="left:459px;top:186px;width:1px;height:17px;background:linear-gradient(#fff,#d0d0d0)"></div>
<div class="vl" style="left:459px;top:204px;height:604px"></div>
<div class="a" style="left:531px;top:186px;width:1px;height:17px;background:linear-gradient(#fff,#d0d0d0)"></div>
<div class="vl" style="left:531px;top:204px;height:604px"></div>
<div class="a" style="left:603px;top:186px;width:1px;height:17px;background:linear-gradient(#fff,#d0d0d0)"></div>
<div class="vl" style="left:603px;top:204px;height:604px"></div>
<div class="a" style="left:675px;top:186px;width:1px;height:17px;background:linear-gradient(#fff,#d0d0d0)"></div>
<div class="vl" style="left:675px;top:204px;height:604px"></div>
<div class="a" style="left:747px;top:186px;width:1px;height:17px;background:linear-gradient(#fff,#d0d0d0)"></div>
<div class="vl" style="left:747px;top:204px;height:604px"></div>
<div class="a" style="left:819px;top:186px;width:1px;height:17px;background:linear-gradient(#fff,#d0d0d0)"></div>
<div class="vl" style="left:819px;top:204px;height:604px"></div>
<div class="a" style="left:891px;top:186px;width:1px;height:17px;background:linear-gradient(#fff,#d0d0d0)"></div>
<div class="vl" style="left:891px;top:204px;height:604px"></div>
<div class="a" style="left:963px;top:186px;width:1px;height:17px;background:linear-gradient(#fff,#d0d0d0)"></div>
<div class="vl" style="left:963px;top:204px;height:604px"></div>
<div class="a" style="left:1035px;top:186px;width:1px;height:17px;background:linear-gradient(#fff,#d0d0d0)"></div>
<div class="vl" style="left:1035px;top:204px;height:604px"></div>
<div class="a" style="left:1107px;top:186px;width:1px;height:17px;background:linear-gradient(#fff,#d0d0d0)"></div>
<div class="vl" style="left:1107px;top:204px;height:604px"></div>
<div class="a" style="left:1179px;top:186px;width:1px;height:17px;background:linear-gradient(#fff,#d0d0d0)"></div>
<div class="vl" style="left:1179px;top:204px;height:604px"></div>
<div class="a" style="left:1251px;top:186px;width:1px;height:17px;background:linear-gradient(#fff,#d0d0d0)"></div>
<div class="vl" style="left:1251px;top:204px;height:604px"></div>
<div class="a" style="left:1323px;top:186px;width:1px;height:17px;background:linear-gradient(#fff,#d0d0d0)"></div>
<div class="vl" style="left:1323px;top:204px;height:604px"></div>
<div class="a" style="left:1395px;top:186px;width:1px;height:17px;background:linear-gradient(#fff,#d0d0d0)"></div>
<div class="vl" style="left:1395px;top:204px;height:604px"></div>
<div class="ch" style="left:28px;top:190px">A</div>
<div class="ch" style="left:100px;top:190px">B</div>
<div class="ch" style="left:172px;top:190px">C</div>
<div class="ch" style="left:244px;top:190px">D</div>
<div class="ch" style="left:316px;top:190px">E</div>
<div class="ch" style="left:388px;top:190px">F</div>
<div class="ch" style="left:460px;top:190px">G</div>
<div class="ch" style="left:532px;top:190px">H</div>
<div class="ch" style="left:604px;top:190px">I</div>
<div class="ch" style="left:676px;top:190px">J</div>
<div class="ch" style="left:748px;top:190px">K</div>
<div class="ch" style="left:820px;top:190px">L</div>
<div class="ch" style="left:892px;top:190px">M</div>
<div class="ch" style="left:964px;top:190px">N</div>
<div class="ch" style="left:1036px;top:190px">O</div>
<div class="ch" style="left:1108px;top:190px">P</div>
<div class="ch" style="left:1180px;top:190px">Q</div>
<div class="ch" style="left:1252px;top:190px">R</div>
<div class="ch" style="left:1324px;top:190px">S</div>
<div class="hl" style="left:0;top:240px;width:27px;background:#dcdcdc"></div>
<div class="hl" style="left:28px;top:240px;width:1389px"></div>
<div class="hl" style="left:0;top:266px;width:27px;background:#dcdcdc"></div>
<div class="hl" style="left:28px;top:266px;width:1389px"></div>
<div class="hl" style="left:0;top:292px;width:27px;background:#dcdcdc"></div>
<div class="hl" style="left:28px;top:292px;width:1389px"></div>
<div class="hl" style="left:0;top:318px;width:27px;background:#dcdcdc"></div>
<div class="hl" style="left:28px;top:318px;width:1389px"></div>
<div class="hl" style="left:0;top:344px;width:27px;background:#dcdcdc"></div>
<div class="hl" style="left:28px;top:344px;width:1389px"></div>
<div class="hl" style="left:0;top:370px;width:27px;background:#dcdcdc"></div>
<div class="hl" style="left:28px;top:370px;width:1389px"></div>
<div class="hl" style="left:0;top:396px;width:27px;background:#dcdcdc"></div>
<div class="hl" style="left:28px;top:396px;width:1389px"></div>
<div class="hl" style="left:0;top:422px;width:27px;background:#dcdcdc"></div>
<div class="hl" style="left:28px;top:422px;width:1389px"></div>
<div class="hl" style="left:0;top:448px;width:27px;background:#dcdcdc"></div>
<div class="hl" style="left:28px;top:448px;width:1389px"></div>
<div class="hl" style="left:0;top:474px;width:27px;background:#dcdcdc"></div>
<div class="hl" style="left:28px;top:474px;width:1389px"></div>
<div class="hl" style="left:0;top:500px;width:27px;background:#dcdcdc"></div>
<div class="hl" style="left:28px;top:500px;width:1389px"></div>
<div class="hl" style="left:0;top:526px;width:27px;background:#dcdcdc"></div>
<div class="hl" style="left:28px;top:526px;width:1389px"></div>
<div class="hl" style="left:0;top:552px;width:27px;background:#dcdcdc"></div>
<div class="hl" style="left:28px;top:552px;width:1389px"></div>
<div class="hl" style="left:0;top:578px;width:27px;background:#dcdcdc"></div>
<div class="hl" style="left:28px;top:578px;width:1389px"></div>
<div class="hl" style="left:0;top:604px;width:27px;background:#dcdcdc"></div>
<div class="hl" style="left:28px;top:604px;width:1389px"></div>
<div class="hl" style="left:0;top:631px;width:27px;background:#dcdcdc"></div>
<div class="hl" style="left:28px;top:631px;width:1389px"></div>
<div class="hl" style="left:0;top:649px;width:27px;background:#dcdcdc"></div>
<div class="hl" style="left:28px;top:649px;width:1389px"></div>
<div class="hl" style="left:0;top:667px;width:27px;background:#dcdcdc"></div>
<div class="hl" style="left:28px;top:667px;width:1389px"></div>
<div class="hl" style="left:0;top:685px;width:27px;background:#dcdcdc"></div>
<div class="hl" style="left:28px;top:685px;width:1389px"></div>
<div class="hl" style="left:0;top:703px;width:27px;background:#dcdcdc"></div>
<div class="hl" style="left:28px;top:703px;width:1389px"></div>
<div class="hl" style="left:0;top:721px;width:27px;background:#dcdcdc"></div>
<div class="hl" style="left:28px;top:721px;width:1389px"></div>
<div class="hl" style="left:0;top:739px;width:27px;background:#dcdcdc"></div>
<div class="hl" style="left:28px;top:739px;width:1389px"></div>
<div class="hl" style="left:0;top:757px;width:27px;background:#dcdcdc"></div>
<div class="hl" style="left:28px;top:757px;width:1389px"></div>
<div class="hl" style="left:0;top:775px;width:27px;background:#dcdcdc"></div>
<div class="hl" style="left:28px;top:775px;width:1389px"></div>
<div class="hl" style="left:0;top:793px;width:27px;background:#dcdcdc"></div>
<div class="hl" style="left:28px;top:793px;width:1389px"></div>
<div class="a" style="left:0;top:204px;width:27px;height:604px;overflow:hidden">
<div class="rh" style="top:22px">1</div>
<div class="rh" style="top:48px">2</div>
<div class="rh" style="top:74px">3</div>
<div class="rh" style="top:100px">4</div>
<div class="rh" style="top:126px">5</div>
<div class="rh" style="top:152px">6</div>
<div class="rh" style="top:178px">7</div>
<div class="rh" style="top:204px">8</div>
<div class="rh" style="top:230px">9</div>
<div class="rh" style="top:256px">10</div>
<div class="rh" style="top:282px">11</div>
<div class="rh" style="top:308px">12</div>
<div class="rh" style="top:334px">13</div>
<div class="rh" style="top:360px">14</div>
<div class="rh" style="top:386px">15</div>
<div class="rh" style="top:413px">16</div>
<div class="rh" style="top:431px">17</div>
<div class="rh" style="top:449px">18</div>
<div class="rh" style="top:467px">19</div>
<div class="rh" style="top:485px">20</div>
<div class="rh" style="top:503px">21</div>
<div class="rh" style="top:521px">22</div>
<div class="rh" style="top:539px">23</div>
<div class="rh" style="top:557px">24</div>
<div class="rh" style="top:575px">25</div>
<div class="rh" style="top:593px">26</div>
</div>
<div class="hd" style="left:28.5px;top:213.5px">部门</div>
<div class="hd" style="left:100.5px;top:213.5px">一月</div>
<div class="hd" style="left:172.5px;top:213.5px">二月</div>
<div class="hd" style="left:244.5px;top:213.5px">三月</div>
<div class="hd" style="left:316.5px;top:213.5px">四月</div>
<div class="hd" style="left:388.5px;top:213.5px">五月</div>
<div class="hd" style="left:460.5px;top:213.5px">六月</div>
<div class="c cl" style="left:27px;top:247px">A</div>
<div class="c" style="left:99px;top:247px">3392</div>
<div class="c" style="left:171px;top:247px">1865</div>
<div class="c" style="left:243px;top:247px">3387</div>
<div class="c" style="left:315px;top:247px">2167</div>
<div class="c" style="left:387px;top:247px">1646</div>
<div class="c" style="left:459px;top:247px">3240</div>
<div class="c" style="left:531px;top:247px">15697</div>
<div class="c cl" style="left:27px;top:273px">B</div>
<div class="c" style="left:99px;top:273px">1141</div>
<div class="c" style="left:171px;top:273px">2769</div>
<div class="c" style="left:243px;top:273px">1126</div>
<div class="c" style="left:315px;top:273px">1719</div>
<div class="c" style="left:387px;top:273px">2529</div>
<div class="c" style="left:459px;top:273px">1662</div>
<div class="c" style="left:531px;top:273px">10946</div>
<div class="c cl" style="left:27px;top:299px">C</div>
<div class="c" style="left:99px;top:299px">3018</div>
<div class="c" style="left:171px;top:299px">1897</div>
<div class="c" style="left:243px;top:299px">3531</div>
<div class="c" style="left:315px;top:299px">4721</div>
<div class="c" style="left:387px;top:299px">4885</div>
<div class="c" style="left:459px;top:299px">1046</div>
<div class="c" style="left:531px;top:299px">19098</div>
<div class="c cl" style="left:27px;top:325px">D</div>
<div class="c" style="left:99px;top:325px">3693</div>
<div class="c" style="left:171px;top:325px">3480</div>
<div class="c" style="left:243px;top:325px">3683</div>
<div class="c" style="left:315px;top:325px">4200</div>
<div class="c" style="left:387px;top:325px">2172</div>
<div class="c" style="left:459px;top:325px">1906</div>
<div class="c" style="left:531px;top:325px">19134</div>
<div class="c cl" style="left:27px;top:351px">E</div>
<div class="c" style="left:99px;top:351px">3932</div>
<div class="c" style="left:171px;top:351px">2630</div>
<div class="c" style="left:243px;top:351px">4459</div>
<div class="c" style="left:315px;top:351px">2043</div>
<div class="c" style="left:387px;top:351px">1721</div>
<div class="c" style="left:459px;top:351px">1821</div>
<div class="c" style="left:531px;top:351px">16606</div>
<div class="c cl" style="left:27px;top:377px">F</div>
<div class="c" style="left:99px;top:377px">4531</div>
<div class="c" style="left:171px;top:377px">2935</div>
<div class="c" style="left:243px;top:377px">2223</div>
<div class="c" style="left:315px;top:377px">4558</div>
<div class="c" style="left:387px;top:377px">1500000</div>
<div class="c" style="left:459px;top:377px">2276</div>
<div class="c" style="left:531px;top:377px">1516523</div>
<div class="c cl" style="left:27px;top:403px">G</div>
<div class="c" style="left:99px;top:403px">3885</div>
<div class="c" style="left:171px;top:403px">485111</div>
<div class="c" style="left:243px;top:403px">3432</div>
<div class="c" style="left:315px;top:403px">3998</div>
<div class="c" style="left:387px;top:403px">4974</div>
<div class="c" style="left:459px;top:403px">1421</div>
<div class="c" style="left:531px;top:403px">502821</div>
<div class="c cl" style="left:27px;top:429px">H</div>
<div class="c" style="left:99px;top:429px">1755</div>
<div class="c" style="left:171px;top:429px">4069</div>
<div class="c" style="left:243px;top:429px">3529</div>
<div class="c" style="left:315px;top:429px">3592</div>
<div class="c" style="left:387px;top:429px">3107</div>
<div class="c" style="left:459px;top:429px">4718</div>
<div class="c" style="left:531px;top:429px">20770</div>
<div class="c cl" style="left:27px;top:455px">I</div>
<div class="c" style="left:99px;top:455px">3848</div>
<div class="c" style="left:171px;top:455px">2877</div>
<div class="c" style="left:243px;top:455px">3156</div>
<div class="c" style="left:315px;top:455px">3178</div>
<div class="c" style="left:387px;top:455px">2042</div>
<div class="c" style="left:459px;top:455px">2127</div>
<div class="c" style="left:531px;top:455px">17228</div>
<div class="c cl" style="left:27px;top:481px">J</div>
<div class="c" style="left:99px;top:481px">1416</div>
<div class="c" style="left:171px;top:481px">3482</div>
<div class="c" style="left:243px;top:481px">3383</div>
<div class="c" style="left:315px;top:481px">4005</div>
<div class="c" style="left:387px;top:481px">4338</div>
<div class="c" style="left:459px;top:481px">4993</div>
<div class="c" style="left:531px;top:481px">21617</div>
<div class="c cl" style="left:27px;top:507px">K</div>
<div class="c" style="left:99px;top:507px">1737</div>
<div class="c" style="left:171px;top:507px">3129</div>
<div class="c" style="left:243px;top:507px">4212</div>
<div class="c" style="left:315px;top:507px">3025</div>
<div class="c" style="left:387px;top:507px">2989</div>
<div class="c" style="left:459px;top:507px">4118</div>
<div class="c" style="left:531px;top:507px">19210</div>
<div class="c cl" style="left:27px;top:533px">L</div>
<div class="c" style="left:99px;top:533px">1830</div>
<div class="c" style="left:171px;top:533px">4105</div>
<div class="c" style="left:243px;top:533px">4060</div>
<div class="c" style="left:315px;top:533px">1840</div>
<div class="c" style="left:387px;top:533px">2382</div>
<div class="c" style="left:459px;top:533px">2577</div>
<div class="c" style="left:531px;top:533px">16794</div>
<div class="c cl" style="left:27px;top:559px">M</div>
<div class="c" style="left:99px;top:559px">3837</div>
<div class="c" style="left:171px;top:559px">1700</div>
<div class="c" style="left:243px;top:559px">2834</div>
<div class="c" style="left:315px;top:559px">4685</div>
<div class="c" style="left:387px;top:559px">1202</div>
<div class="c" style="left:459px;top:559px">2690</div>
<div class="c" style="left:531px;top:559px">16948</div>
<div class="c cl" style="left:27px;top:585px">N</div>
<div class="c" style="left:99px;top:585px">4720</div>
<div class="c" style="left:171px;top:585px">1182</div>
<div class="c" style="left:243px;top:585px">4218</div>
<div class="c" style="left:315px;top:585px">3435</div>
<div class="c" style="left:387px;top:585px">3941</div>
<div class="c" style="left:459px;top:585px">4280</div>
<div class="c" style="left:531px;top:585px">21776</div>
<div class="c" style="left:99px;top:611px">42735</div>
<div class="c" style="left:171px;top:611px">521231</div>
<div class="c" style="left:243px;top:611px">47233</div>
<div class="c" style="left:315px;top:611px">47166</div>
<div class="c" style="left:387px;top:611px">1537928</div>
<div class="c" style="left:459px;top:611px">38875</div>
<div class="c" style="left:531px;top:611px">2235168</div>
<div class="bk" style="left:28px;top:240px;width:504px;height:1px"></div>
<div class="bk" style="left:28px;top:266px;width:504px;height:1px"></div>
<div class="bk" style="left:28px;top:292px;width:504px;height:1px"></div>
<div class="bk" style="left:28px;top:318px;width:504px;height:1px"></div>
<div class="bk" style="left:28px;top:344px;width:504px;height:1px"></div>
<div class="bk" style="left:28px;top:370px;width:504px;height:1px"></div>
<div class="bk" style="left:28px;top:396px;width:504px;height:1px"></div>
<div class="bk" style="left:28px;top:422px;width:504px;height:1px"></div>
<div class="bk" style="left:28px;top:448px;width:504px;height:1px"></div>
<div class="bk" style="left:28px;top:474px;width:504px;height:1px"></div>
<div class="bk" style="left:28px;top:500px;width:504px;height:1px"></div>
<div class="bk" style="left:28px;top:526px;width:504px;height:1px"></div>
<div class="bk" style="left:28px;top:552px;width:504px;height:1px"></div>
<div class="bk" style="left:28px;top:578px;width:504px;height:1px"></div>
<div class="bk" style="left:28px;top:604px;width:504px;height:1px"></div>
<div class="bk" style="left:99px;top:204px;width:1px;height:401px"></div>
<div class="bk" style="left:171px;top:204px;width:1px;height:401px"></div>
<div class="bk" style="left:243px;top:204px;width:1px;height:401px"></div>
<div class="bk" style="left:315px;top:204px;width:1px;height:401px"></div>
<div class="bk" style="left:387px;top:204px;width:1px;height:401px"></div>
<div class="bk" style="left:459px;top:204px;width:1px;height:401px"></div>
<div class="bk" style="left:531px;top:204px;width:1px;height:401px"></div>
<div class="a" style="left:0;top:809px;width:1437px;height:27px;background:#f5f5f5"></div>
<div class="a" style="left:1418px;top:186px;width:19px;height:623px;background:#fff"></div>
<!-- vscroll -->
<div class="a" style="left:1421px;top:188px;width:15px;height:621px;background:#f3f3f3"></div>
<div class="a" style="left:1421px;top:188px;width:13px;height:13px;background:#fff;border:1px solid #c6c6c6"></div>
<svg width="7" height="4" viewBox="0 0 7 4" style="left:1425px;top:193px"><path d="M0 4 L3.5 0 L7 4 Z" fill="#777"/></svg>
<div class="a" style="left:1421px;top:203px;width:13px;height:565px;background:#fff;border:1px solid #ababab"></div>
<div class="a" style="left:1421px;top:794px;width:13px;height:13px;background:#fff;border:1px solid #c6c6c6"></div>
<svg width="7" height="4" viewBox="0 0 7 4" style="left:1425px;top:800px"><path d="M0 0 L3.5 4 L7 0 Z" fill="#777"/></svg>
<!-- sheet tabs -->
<svg width="5" height="7" viewBox="0 0 5 7" style="left:26px;top:818px"><path d="M5 0 L0 3.5 L5 7 Z" fill="#c6c6c6"/></svg>
<svg width="5" height="7" viewBox="0 0 5 7" style="left:55px;top:818px"><path d="M0 0 L5 3.5 L0 7 Z" fill="#c6c6c6"/></svg>
<div class="a" style="left:99px;top:808px;width:67px;height:23px;background:#fff;border-left:1px solid #ababab;border-right:1px solid #ababab;border-bottom:2px solid #217346"></div>
<div class="t" style="left:112px;top:813px;font-size:14.5px;letter-spacing:-0.75px;color:#217346">Sheet1</div>
<svg width="17" height="17" viewBox="0 0 17 17" style="left:200px;top:813px"><circle cx="8.5" cy="8.5" r="7.5" fill="none" stroke="#777" stroke-width="1.1"/><path d="M4.5 8.5 H12.5 M8.5 4.5 V12.5" stroke="#666" stroke-width="2"/></svg>
<div class="a" style="left:863px;top:818px;width:2px;height:2px;background:#b0b0b0"></div>
<div class="a" style="left:863px;top:822px;width:2px;height:2px;background:#b0b0b0"></div>
<div class="a" style="left:863px;top:826px;width:2px;height:2px;background:#b0b0b0"></div>
<div class="a" style="left:880px;top:815px;width:13px;height:13px;background:#fff;border:1px solid #ababab"></div>
<svg width="4" height="7" viewBox="0 0 4 7" style="left:885px;top:819px"><path d="M4 0 L0 3.5 L4 7 Z" fill="#777"/></svg>
<div class="a" style="left:895px;top:815px;width:508px;height:15px;background:#e8e8e8"></div>
<div class="a" style="left:895px;top:815px;width:479px;height:13px;background:#fff;border:1px solid #ababab"></div>
<div class="a" style="left:1403px;top:815px;width:13px;height:13px;background:#fff;border:1px solid #ababab"></div>
<svg width="4" height="7" viewBox="0 0 4 7" style="left:1409px;top:819px"><path d="M0 0 L4 3.5 L0 7 Z" fill="#777"/></svg>
<!-- status bar -->
<div class="a" style="left:0;top:836px;width:1437px;height:21px;background:#217346"></div>
<div class="t d" style="left:6px;top:840px;font-size:12px;color:#fff;">就绪</div>
<svg width="14" height="13" viewBox="0 0 14 13" style="left:50px;top:840px"><circle cx="3.3" cy="3.3" r="3.3" fill="#fff"/><path d="M7.5 0.8 H12.6 V12.2 H1.4 V7.5" fill="none" stroke="#fff" stroke-width="1.4"/><path d="M3.5 8 h2 M6.5 8 h2 M9.5 8 h2 M3.5 10.3 h2 M6.5 10.3 h2 M9.5 10.3 h2 M7 5.5 h4.5" stroke="#fff" stroke-width="1.3"/></svg>
<div class="a" style="left:1142px;top:836px;width:38px;height:21px;background:#0f5c33"></div>
<svg width="13" height="13" viewBox="0 0 13 13" style="left:1154px;top:840px"><path d="M0.6 0.6 H12.4 V12.4 H0.6 Z M4.5 0.6 V12.4 M8.5 0.6 V12.4 M0.6 4.5 H12.4 M0.6 8.5 H12.4" fill="none" stroke="#fff" stroke-width="1.2"/></svg>
<svg width="14" height="13" viewBox="0 0 14 13" style="left:1192px;top:840px"><path d="M0.6 0.6 H13.4 V12.4 H0.6 Z M3.6 3 H10.4 V10 H3.6 Z M5 5 H9 M5 6.8 H9 M5 8.4 H9" fill="none" stroke="#fff" stroke-width="1.1"/></svg>
<svg width="14" height="13" viewBox="0 0 14 13" style="left:1230px;top:840px"><path d="M0.6 0.6 H13.4 V12.4 H0.6 Z" fill="none" stroke="#fff" stroke-width="1.2"/><path d="M1.2 1.2 H4.6 V7.8 H1.2 Z M6 1.2 H8.6 V7.8 H6 Z" fill="#e9f1ec"/><path d="M0.6 8.2 H9 V0.6" fill="none" stroke="#fff" stroke-width="1.1"/></svg>
<div class="a" style="left:1261px;top:846px;width:6px;height:2px;background:#fff"></div>
<div class="a" style="left:1271px;top:846px;width:100px;height:1px;background:#fff"></div>
<div class="a" style="left:1319px;top:841px;width:4px;height:11px;background:#fff"></div>
<div class="a" style="left:1375px;top:846px;width:8px;height:2px;background:#fff"></div>
<div class="a" style="left:1378px;top:843px;width:2px;height:8px;background:#fff"></div>
<div class="t d" style="left:1399px;top:839px;font-size:12px;color:#fff;">100%</div>
</body></html>
